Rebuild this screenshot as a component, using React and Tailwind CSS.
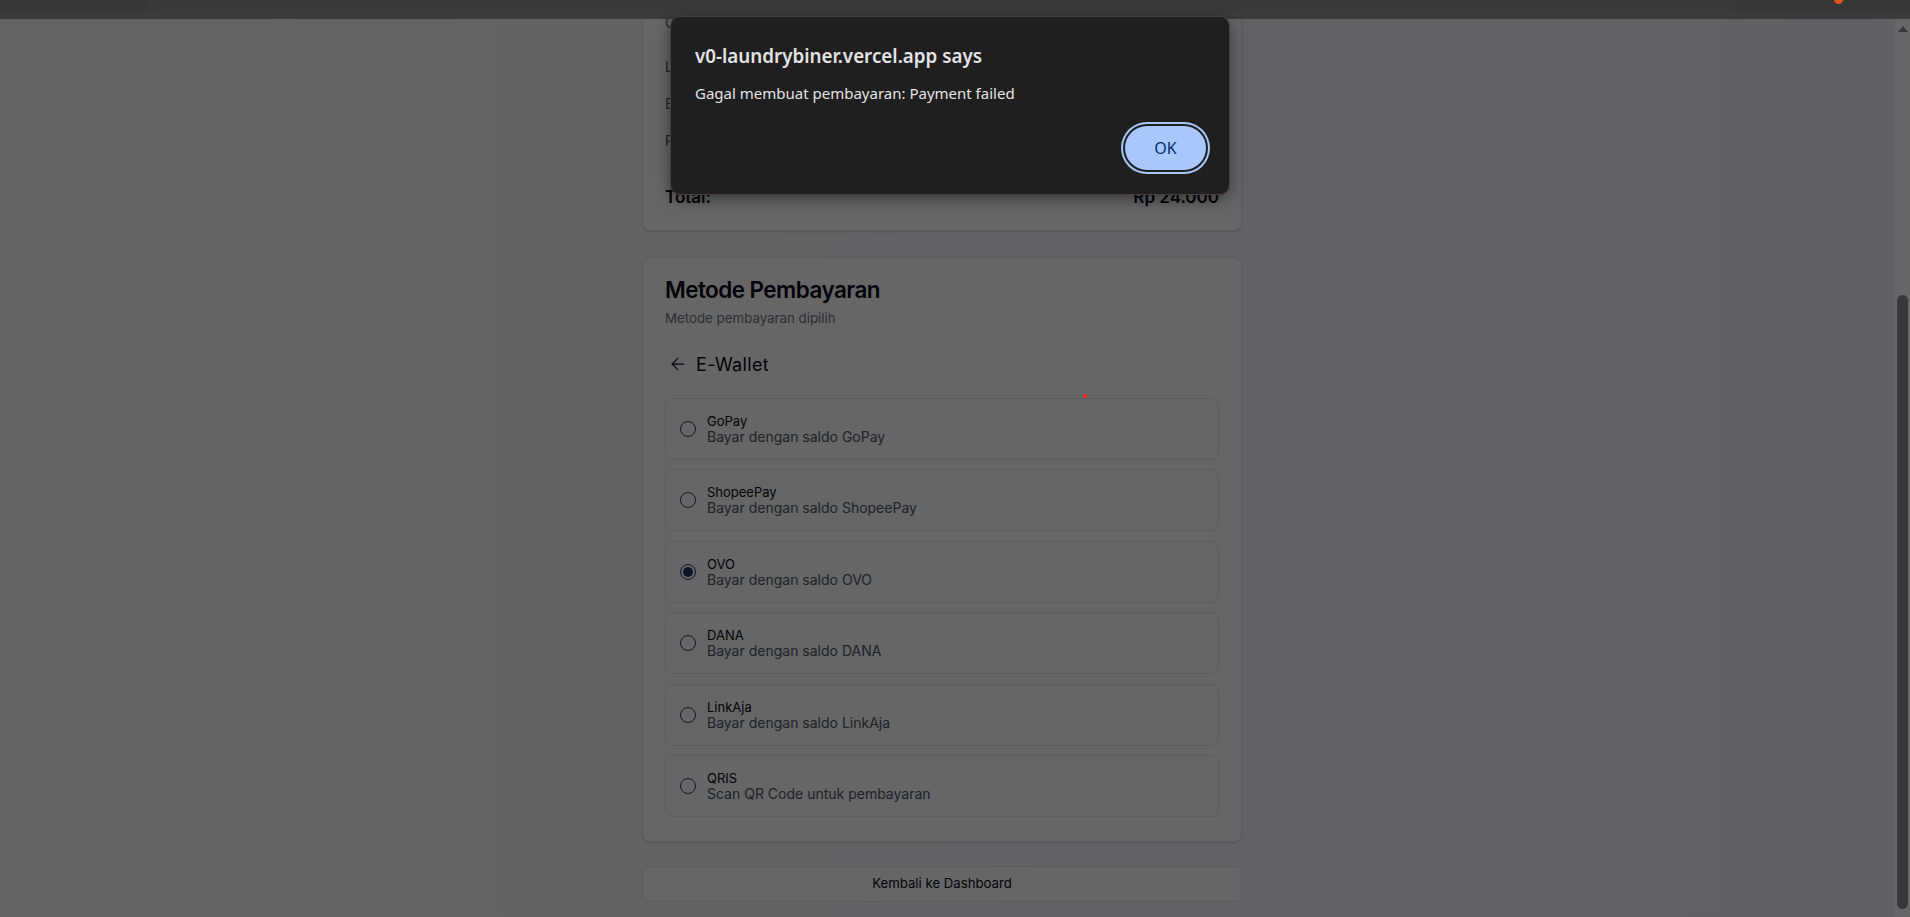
import { ArrowLeft } from 'lucide-react';

const wallets = [
  { name: 'GoPay', desc: 'Bayar dengan saldo GoPay' },
  { name: 'ShopeePay', desc: 'Bayar dengan saldo ShopeePay' },
  { name: 'OVO', desc: 'Bayar dengan saldo OVO', checked: true },
  { name: 'DANA', desc: 'Bayar dengan saldo DANA' },
  { name: 'LinkAja', desc: 'Bayar dengan saldo LinkAja' },
  { name: 'QRIS', desc: 'Scan QR Code untuk pembayaran' },
];

const summary = [
  { label: 'Customer:', value: 'Budi Santoso' },
  { label: 'Layanan:', value: 'Cuci Kering Setrika' },
  { label: 'Estimasi Berat:', value: '4 kg' },
  { label: 'Pengiriman:', value: 'Antar Jemput' },
];

function ChromeBar() {
  return (
    <div className="relative h-[19px] bg-[#3b3b3b]">
      <div className="flex h-[11px] bg-[#363636]">
        <div className="ml-[146px] h-full w-[1590px] rounded-b-[12px] bg-[#393939]" />
      </div>
      <div className="absolute left-[1834px] -top-[5px] h-[9px] w-[9px] rounded-full bg-[#e0531f]" />
    </div>
  );
}

function Radio({ checked }) {
  return (
    <span className="flex h-4 w-4 shrink-0 items-center justify-center rounded-full border border-[#1e3a5f]">
      {checked && <span className="h-2.5 w-2.5 rounded-full bg-[#1e3a5f]" />}
    </span>
  );
}

function OrderSummary() {
  return (
    <div className="rounded-lg border border-gray-200 bg-white shadow-sm">
      <div className="flex flex-col gap-1.5 px-[22px] py-6">
        <h2 className="text-[22.5px] font-semibold leading-6 tracking-tight text-gray-950">Ringkasan Pesanan</h2>
        <p className="text-[13.3px] leading-5 text-gray-500">Detail pesanan laundry Anda</p>
      </div>
      <div className="px-[22px] pb-[19px] text-sm">
        {summary.map((row, i) => (
          <div
            key={row.label}
            className={i === 0 ? 'flex justify-between leading-5' : i === 1 ? 'mt-6 flex justify-between leading-5' : 'mt-[17px] flex justify-between leading-5'}
          >
            <span className="text-gray-600">{row.label}</span>
            <span className="font-medium text-gray-950">{row.value}</span>
          </div>
        ))}
        <div className="mt-[17px] flex justify-between border-t border-gray-200 pt-[14px] text-[17px] font-semibold leading-7 text-gray-950">
          <span>Total:</span>
          <span>Rp 24.000</span>
        </div>
      </div>
    </div>
  );
}

function PaymentMethod() {
  return (
    <div className="mt-[26px] rounded-lg border border-gray-200 bg-white shadow-sm">
      <div className="flex flex-col gap-1.5 px-[22px] pb-6 pt-5">
        <h2 className="text-[22.5px] font-semibold leading-6 tracking-tight text-gray-950">Metode Pembayaran</h2>
        <p className="text-[13.3px] leading-5 text-gray-500">Metode pembayaran dipilih</p>
      </div>
      <div className="px-[22px] pb-6">
        <div className="flex h-6 items-center gap-2 pl-[3px]">
          <ArrowLeft className="h-5 w-5 text-gray-900" strokeWidth={1.5} />
          <span className="text-[18px] tracking-[0.02em] text-gray-950">E-Wallet</span>
        </div>
        <div className="mt-[22px] flex flex-col gap-[9.4px]">
          {wallets.map((w) => (
            <label
              key={w.name}
              className="flex h-[62px] items-center gap-[11px] rounded-lg border border-gray-200 px-[14px]"
            >
              <Radio checked={w.checked} />
              <div className="flex flex-col leading-4">
                <span className="text-[13px] text-gray-950">{w.name}</span>
                <span className="text-[14px] text-gray-600">{w.desc}</span>
              </div>
            </label>
          ))}
        </div>
      </div>
    </div>
  );
}

function Scrollbar() {
  return (
    <div className="flex w-[15px] flex-col items-center bg-white">
      <div className="mt-[7px] h-0 w-0 border-x-[5px] border-b-[6px] border-x-transparent border-b-[#8c8c8c]" />
      <div className="mt-[263px] h-[614px] w-[11px] rounded-full bg-[#8c8c8c]" />
    </div>
  );
}

function AlertDialog() {
  return (
    <div className="absolute left-[670px] top-[16px] flex h-[179px] w-[560px] flex-col rounded-[10px] border border-[#4a3f3d] bg-[#1f1f1f] pl-[24px] pr-[23px] pt-[27px] font-['Noto_Sans',sans-serif] text-[#e3e3e3] shadow-[0_4px_16px_rgba(0,0,0,0.45)]">
      <div className="text-[18.8px] font-semibold leading-6">v0-laundrybiner.vercel.app says</div>
      <div className="mt-[15px] text-[15px] leading-5">Gagal membuat pembayaran: Payment failed</div>
      <div className="mt-[23px] flex justify-end">
        <button className="h-[44px] w-[81px] rounded-full bg-[#a8c7fa] text-[16px] text-[#062e6f] ring-2 ring-[#a8c7fa] ring-offset-2 ring-offset-[#1f1f1f]">
          OK
        </button>
      </div>
    </div>
  );
}

export default function App() {
  return (
    <div className="relative h-[917px] w-full overflow-hidden font-['Inter',sans-serif]">
      <ChromeBar />
      <div className="relative flex h-[898px]">
        <main className="flex flex-1 items-start justify-center overflow-hidden bg-linear-to-r from-[#f8fafd] to-[#eef3fb] pr-[11px]">
          <div className="-mt-[105px] flex w-[600px] flex-col">
            <OrderSummary />
            <PaymentMethod />
            <button className="mt-6 h-9 w-full rounded-md border border-gray-200 bg-white text-[13.2px] text-gray-950">
              Kembali ke Dashboard
            </button>
          </div>
        </main>
        <Scrollbar />
        <div className="absolute inset-0 bg-black/60" />
      </div>
      <AlertDialog />
      <div className="absolute left-[1083px] top-[394px] h-[4px] w-[4px] rounded-full bg-[#ff1f1f]" />
    </div>
  );
}
